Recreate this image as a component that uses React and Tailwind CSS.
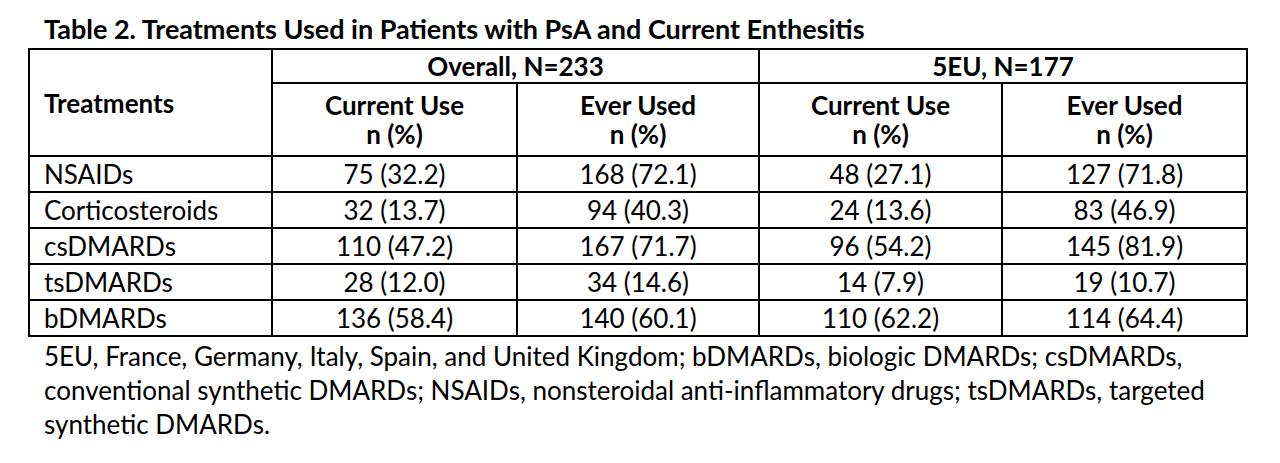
import React from "react";

const rows = [
  { name: "NSAIDs", values: ["75 (32.2)", "168 (72.1)", "48 (27.1)", "127 (71.8)"] },
  { name: "Corticosteroids", values: ["32 (13.7)", "94 (40.3)", "24 (13.6)", "83 (46.9)"] },
  { name: "csDMARDs", values: ["110 (47.2)", "167 (71.7)", "96 (54.2)", "145 (81.9)"] },
  { name: "tsDMARDs", values: ["28 (12.0)", "34 (14.6)", "14 (7.9)", "19 (10.7)"] },
  { name: "bDMARDs", values: ["136 (58.4)", "140 (60.1)", "110 (62.2)", "114 (64.4)"] },
];

const cell = "border-2 border-black";

const App = () => {
  return (
    <div className="w-[1280px] h-[463px] bg-white text-black font-['Lato',sans-serif] px-[28px] pt-[14px]">
      {/* Caption */}
      <h2 className="pl-[16px] text-[27px] leading-[30px] font-bold">
        Table 2. Treatments Used in Patients with PsA and Current Enthesitis
      </h2>

      {/* Table */}
      <table className="mt-[4px] w-[1218px] table-fixed border-collapse text-[26px]">
        <colgroup>
          <col className="w-[243px]" />
          <col className="w-[245px]" />
          <col className="w-[242px]" />
          <col className="w-[243px]" />
          <col className="w-[245px]" />
        </colgroup>
        <thead>
          <tr className="h-[34px] leading-[30px]">
            <th rowSpan={2} className={`${cell} text-left font-bold pl-[14px]`}>Treatments</th>
            <th colSpan={2} className={`${cell} font-bold`}>Overall, N=233</th>
            <th colSpan={2} className={`${cell} font-bold`}>5EU, N=177</th>
          </tr>
          <tr className="h-[73px] leading-[29px]">
            {["Current Use", "Ever Used", "Current Use", "Ever Used"].map((label, i) => (
              <th key={i} className={`${cell} font-bold`}>
                {label}
                <br />
                n (%)
              </th>
            ))}
          </tr>
        </thead>
        <tbody>
          {rows.map((row) => (
            <tr key={row.name} className="h-[36px] leading-[30px]">
              <td className={`${cell} pl-[14px]`}>{row.name}</td>
              {row.values.map((v, i) => (
                <td key={i} className={`${cell} text-center`}>{v}</td>
              ))}
            </tr>
          ))}
        </tbody>
      </table>

      {/* Footnote */}
      <p className="pl-[16px] text-[26px] leading-[34px] mt-[2px]">
        5EU, France, Germany, Italy, Spain, and United Kingdom; bDMARDs, biologic DMARDs; csDMARDs,
        <br />
        conventional synthetic DMARDs; NSAIDs, nonsteroidal anti-inflammatory drugs; tsDMARDs, targeted
        <br />
        synthetic DMARDs.
      </p>
    </div>
  );
};

export default App;
